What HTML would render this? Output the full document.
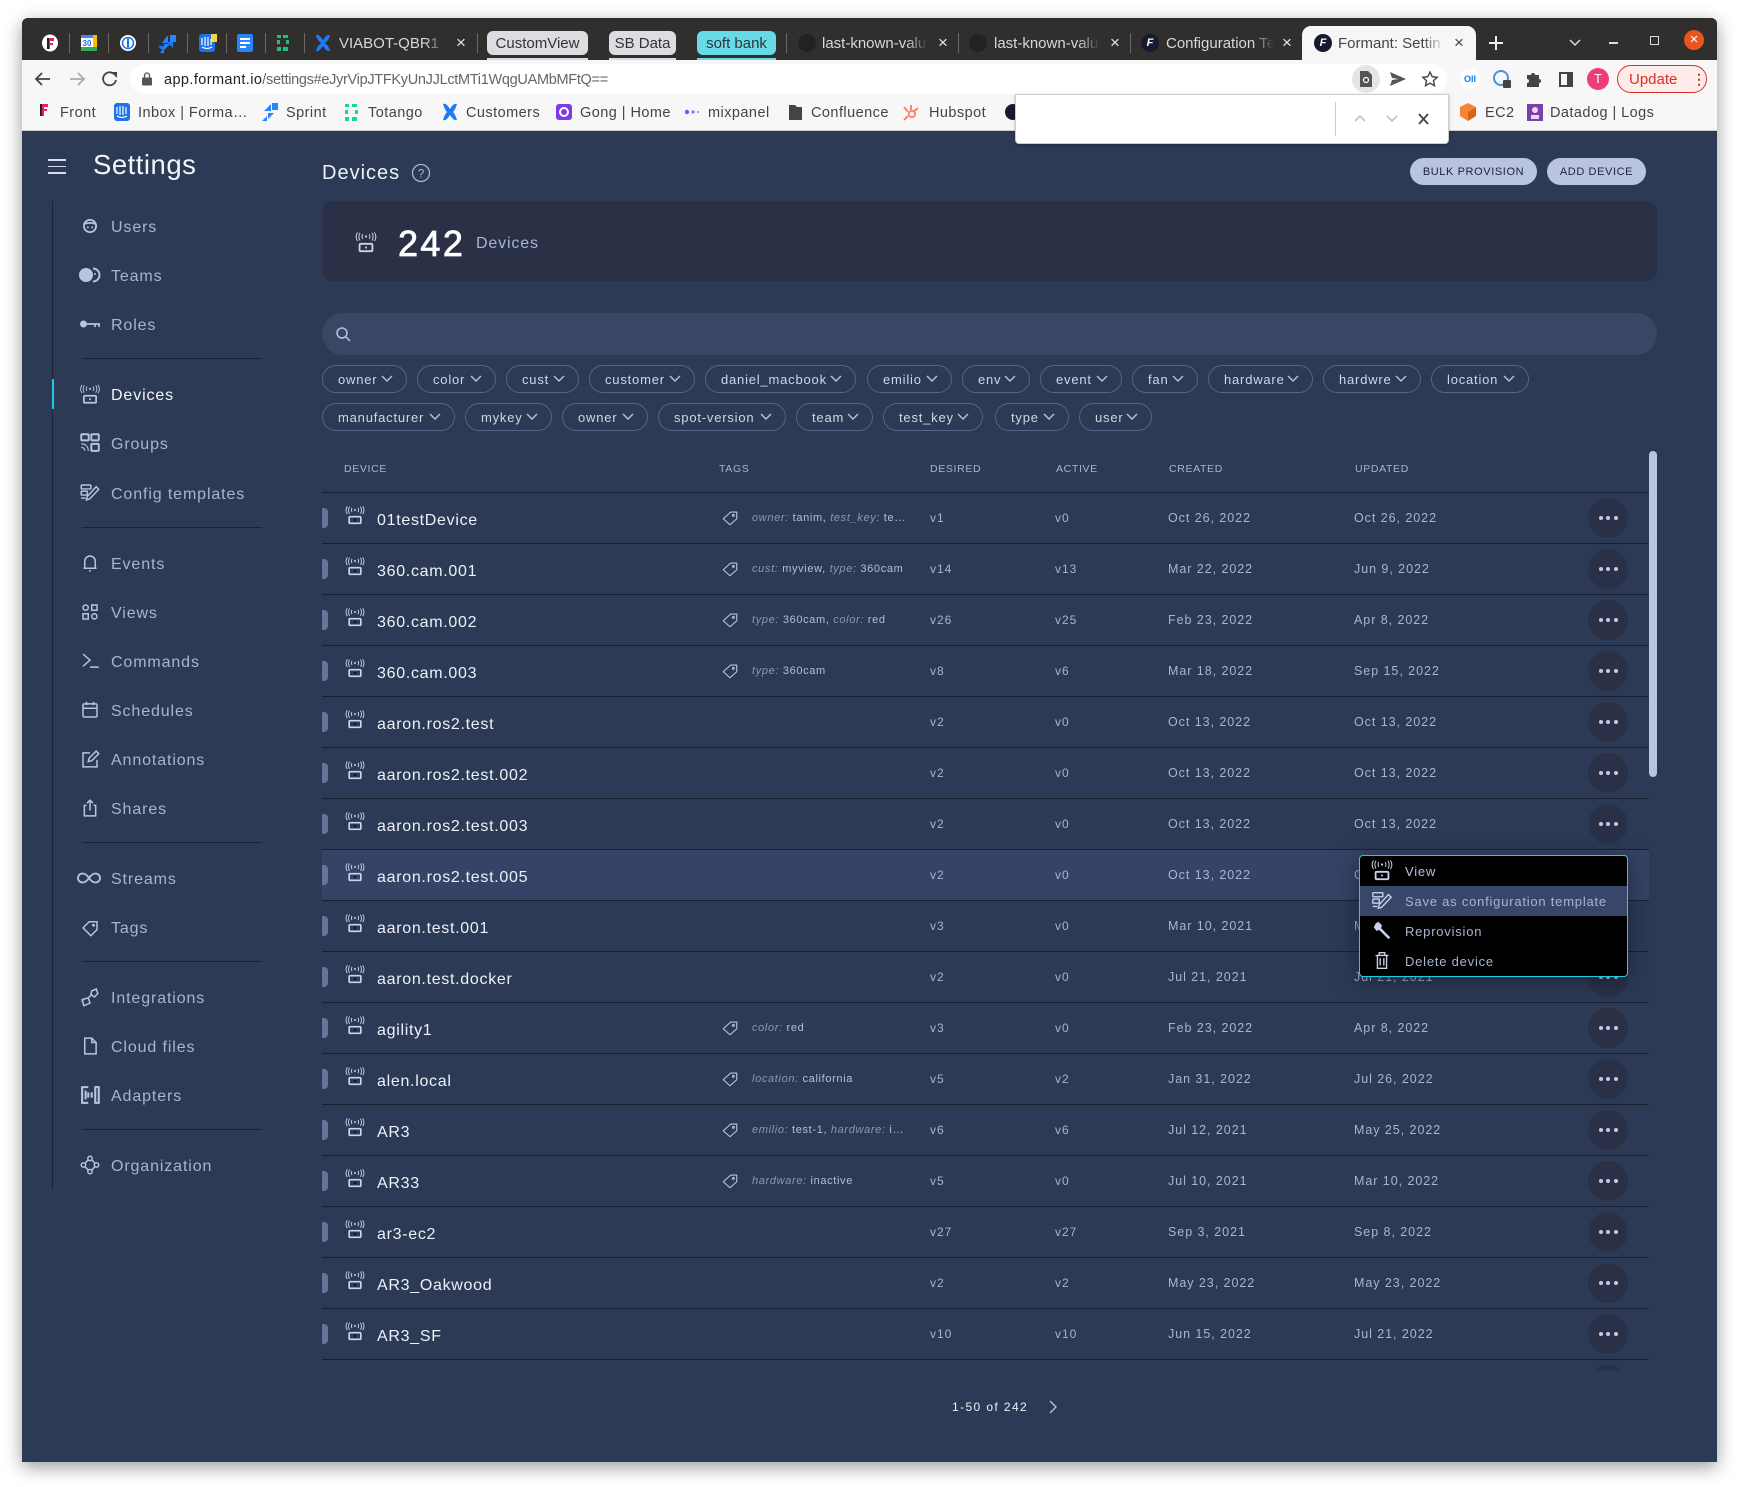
<!DOCTYPE html>
<html lang="en"><head><meta charset="utf-8"><title>Formant: Settings</title>
<style>
html,body{margin:0;padding:0;background:#fff}
body{width:1739px;height:1487px;position:relative;overflow:hidden;font-family:"Liberation Sans",sans-serif}
*{box-sizing:border-box}
.a{position:absolute;white-space:nowrap}
#win{left:22px;top:18px;width:1695px;height:1444px;background:#2c3a55;box-shadow:0 5px 18px rgba(0,0,0,.4);border-radius:6px 6px 0 0}
.tt{position:absolute;font-size:15px;line-height:25px;top:31px;color:#d8d8d8;overflow:hidden;white-space:nowrap}
.fade{-webkit-mask-image:linear-gradient(90deg,#000 80%,transparent);mask-image:linear-gradient(90deg,#000 80%,transparent)}
.sep{position:absolute;top:33px;width:1px;height:20px;background:#6b6868}
.x{position:absolute;top:31px;line-height:24px;font-size:17px;color:#e6e6e6;width:14px;text-align:center}
.pill{position:absolute;top:31px;height:24px;border-radius:6px;font-size:15px;line-height:25px;text-align:center;color:#333}
.sliv{position:absolute;top:58px;height:2px}
.bm{position:absolute;top:103px;line-height:20px;font-size:14.5px;letter-spacing:.45px;color:#444}
.ni{position:absolute;left:111px;margin-top:2px;font-size:16px;letter-spacing:.88px;line-height:22px;color:#a7b4d4}
.si{position:absolute;width:24px;height:24px;left:78px;fill:none;stroke:#b8c4e0;stroke-width:1.7;transform:scale(.875)}
.dv{position:absolute;left:82px;width:180px;height:1px;background:#1c2133}
.chip{position:absolute;height:28px;border:1px solid #56648a;border-radius:14px;color:#cfd7ea;font-size:13px;letter-spacing:.8px;line-height:28px;padding-left:15px}
.chip svg{position:absolute;right:13px;top:9px;width:12px;height:8px;fill:none;stroke:#b8c4e0;stroke-width:1.4}
.th{position:absolute;top:459px;font-size:10.5px;line-height:20px;letter-spacing:.65px;color:#a7b4d4}
.r{position:absolute;left:322px;width:1327px;height:51px;border-bottom:1.3px solid #1b2030}
.r>*{position:absolute}
.h{left:0;top:15px;width:6px;height:20px;background:#66749a;border-radius:0 4px 4px 0}
.di{left:23px;top:12px;width:20px;height:20px;fill:none;stroke:#cbd4ea;stroke-width:1.5}
.n{left:55px;top:18px;font-size:16px;letter-spacing:.7px;line-height:20px;color:#eef1f8}
.g{left:399px;top:16px;width:18px;height:18px;fill:none;stroke:#b8c4e0;stroke-width:1.5}
.t{left:430px;top:15px;font-size:11px;letter-spacing:.65px;line-height:20px;color:#b3bfdb}
.t i{color:#8a97b9}
.v{top:15px;font-size:12px;letter-spacing:1px;line-height:20px;color:#a7b4d4}
.v1{left:608px}.v2{left:733px}.c{left:846px;font-size:12.5px;letter-spacing:.95px}.u{left:1032px;font-size:12.5px;letter-spacing:.95px}
.d{left:1266px;top:5px;width:40px;height:40px;border-radius:50%;background:#2a3147}
.d b{position:absolute;top:18px;width:4.4px;height:4.4px;border-radius:50%;background:#c0cbe5}
.d b:nth-child(1){left:10.5px}.d b:nth-child(2){left:18px}.d b:nth-child(3){left:25.5px}
.mi{position:absolute;left:1px;width:267px;height:30px;color:#a7b4d4;font-size:13px;letter-spacing:.78px;line-height:32px;padding-left:45px}
.mi svg{position:absolute;left:11px;top:3px;width:22px;height:22px;fill:none;stroke:#c8d1e8;stroke-width:1.5}
</style></head><body>
<svg width="0" height="0" style="position:absolute"><defs>
<symbol id="dev" viewBox="0 0 24 24"><rect x="5" y="14" width="14" height="8" rx="1.2" stroke-width="2"/><rect x="11" y="17" width="2" height="2" fill="currentColor" stroke="none"/><circle cx="12" cy="6" r="1.2" fill="#cbd4ea" stroke="none"/><path d="M8.5 3.5c-1 1.5-1 3.5 0 5M15.5 3.5c1 1.5 1 3.5 0 5M5.5 2c-1.7 2.5-1.7 6 0 8.500M18.500 2c1.700 2.500 1.700 6 0 8.500M2.800 1.500c-2 3-2 6.500 0 9.500M21.200 1.500c2 3 2 6.500 0 9.500" stroke-width="1.100"/></symbol>
<symbol id="tag" viewBox="0 0 24 24"><path d="M3 13 13 4h8v9l-9 8z" stroke-linejoin="round"/><circle cx="16.500" cy="8.500" r="1.200"/></symbol>
<symbol id="cfg" viewBox="0 0 24 24"><rect x="2" y="4" width="11" height="4.500" rx=".8"/><rect x="2" y="11" width="7" height="4.500" rx=".8"/><path d="M8 21l1-4L19 6l3 3-10.500 11zM2 19h5"/></symbol>
</defs></svg>
<div class="a" id="win"></div>
<!-- tab strip -->
<div class="a" style="left:22px;top:18px;width:1695px;height:42px;background:#312e2e;border-radius:6px 6px 0 0"></div>
<svg class="a" style="left:40px;top:32px" width="260" height="24" viewBox="0 0 260 24">
<ellipse cx="10" cy="11" rx="8" ry="8.500" fill="#fff"/><path d="M7 6h7v3h-4v2h3v2h-3v4H7z" fill="#e6245c"/><path d="M7 6h2v11H7z" fill="#222"/>
<rect x="41" y="3" width="16" height="16" rx="1.500" fill="#fff"/><path d="M41 15h16v4H41z" fill="#34a853"/><path d="M41 3h16v3H41z" fill="#4285f4"/><path d="M53 3h4v12h-4z" fill="#fbbc04"/><text x="47" y="14" font-size="8" font-weight="700" fill="#1a73e8" text-anchor="middle" font-family="Liberation Sans">30</text>
<circle cx="88" cy="11" r="8" fill="#fff"/><circle cx="88" cy="11" r="5.500" fill="none" stroke="#1a73e8" stroke-width="1.500"/><rect x="87" y="6.500" width="2" height="9" fill="#1a73e8"/>
<path d="M122 11h6V4h-1zM130 3h6v7h-6zM120 21l4-5v5zM124 18v-6h6z" fill="#2684ff"/><path d="M118 14h6v6l-6-6zM127 10h6v6z" fill="#1d78f0"/>
<rect x="159" y="2" width="16" height="18" rx="3" fill="#1f73e6"/><rect x="171" y="2" width="6" height="8" fill="#f5d547"/><path d="M162 6v7M165 5v9M168 5v9M171 7v6M162 15c3 2 7 2 10 0" stroke="#fff" stroke-width="1.200" fill="none"/>
<rect x="197" y="2" width="16" height="18" rx="2" fill="#2684fc"/><path d="M200 7h10M200 11h10M200 15h6" stroke="#fff" stroke-width="2"/>
<g fill="#19c37d"><rect x="237" y="3" width="4" height="3"/><rect x="243" y="3" width="5" height="3"/><rect x="237" y="8" width="3" height="4"/><rect x="246" y="8" width="3" height="4"/><rect x="237" y="15" width="4" height="4"/><rect x="243" y="15" width="5" height="4"/></g>
</svg>
<div class="sep" style="left:69px"></div><div class="sep" style="left:108px"></div><div class="sep" style="left:148px"></div><div class="sep" style="left:187px"></div><div class="sep" style="left:226px"></div><div class="sep" style="left:265px"></div><div class="sep" style="left:304px"></div>
<svg class="a" style="left:315px;top:33px" width="16" height="20" viewBox="0 0 18 22"><path d="M1 2c3-1 6 2 8 6 2-4 5-7 8-6-1 4-3 7-6 9 3 2 5 5 6 9-3 1-6-2-8-6-2 4-5 7-8 6 1-4 3-7 6-9C4 9 2 6 1 2z" fill="#1e7cf2"/></svg>
<div class="tt fade" style="left:339px;width:107px">VIABOT-QBR1 - C</div><div class="x" style="left:454px">×</div><div class="sep" style="left:477px"></div>
<div class="pill" style="left:487px;width:101px;background:#dcdde0">CustomView</div><div class="sliv" style="left:487px;width:101px;background:#dcdde0"></div>
<div class="pill" style="left:609px;width:67px;background:#dcdde0">SB Data</div><div class="sliv" style="left:609px;width:67px;background:#dcdde0"></div>
<div class="pill" style="left:697px;width:79px;background:#67dce8">soft bank</div><div class="sliv" style="left:697px;width:79px;background:#67dce8"></div>
<div class="sep" style="left:786px"></div>
<div class="a" style="left:798px;top:34px;width:18px;height:18px;border-radius:50%;background:#222"></div>
<div class="tt fade" style="left:822px;width:106px">last-known-valu</div><div class="x" style="left:936px">×</div><div class="sep" style="left:958px"></div>
<div class="a" style="left:969px;top:34px;width:18px;height:18px;border-radius:50%;background:#222"></div>
<div class="tt fade" style="left:994px;width:106px">last-known-valu</div><div class="x" style="left:1108px">×</div><div class="sep" style="left:1130px"></div>
<div class="a" style="left:1141px;top:34px;width:18px;height:18px;border-radius:50%;background:#161a2e;color:#fff;font:italic 700 11px/18px 'Liberation Sans',sans-serif;text-align:center">F</div>
<div class="tt fade" style="left:1166px;width:108px">Configuration Te</div><div class="x" style="left:1280px">×</div>
<div class="a" style="left:1302px;top:26px;width:174px;height:34px;background:#f6f6f6;border-radius:9px 9px 0 0"></div>
<div class="a" style="left:1314px;top:34px;width:18px;height:18px;border-radius:50%;background:#161a2e;color:#fff;font:italic 700 11px/18px 'Liberation Sans',sans-serif;text-align:center">F</div>
<div class="tt fade" style="left:1338px;width:106px;color:#444">Formant: Settin</div><div class="x" style="left:1452px;color:#444">×</div>
<svg class="a" style="left:1486px;top:33px" width="20" height="20" viewBox="0 0 20 20"><path d="M10 3v14M3 10h14" stroke="#eee" stroke-width="2"/></svg>
<svg class="a" style="left:1569px;top:39px" width="12" height="8" viewBox="0 0 12 8"><path d="M1 1l5 5 5-5" fill="none" stroke="#ddd" stroke-width="1.500"/></svg>
<div class="a" style="left:1609px;top:42px;width:9px;height:1.500px;background:#ddd"></div>
<div class="a" style="left:1650px;top:36px;width:9px;height:9px;border:1.500px solid #ddd"></div>
<div class="a" style="left:1684px;top:30px;width:20px;height:20px;border-radius:50%;background:#e95420;color:#fff;font-size:15px;line-height:20px;text-align:center">×</div>
<!-- toolbar -->
<div class="a" style="left:22px;top:60px;width:1695px;height:71px;background:#f7f7f7;border-bottom:1px solid #ccc"></div>
<div class="a" style="left:130px;top:64px;width:1317px;height:30px;background:#fff;border-radius:15px"></div>
<svg class="a" style="left:33px;top:69px" width="90" height="20" viewBox="0 0 90 20"><path d="M17 10H3M9 4l-6 6 6 6" fill="none" stroke="#444" stroke-width="1.800"/><path d="M37 10h14M45 4l6 6-6 6" fill="none" stroke="#aaa" stroke-width="1.800"/><path d="M81 5a6.500 6.500 0 1 0 2 6" fill="none" stroke="#444" stroke-width="1.800"/><path d="M78 3h6v6z" fill="#444"/></svg>
<svg class="a" style="left:142px;top:72px" width="10" height="14" viewBox="0 0 10 14"><rect x="0" y="5.500" width="10" height="8" rx="1" fill="#555"/><path d="M2.500 6V3.500a2.500 2.500 0 0 1 5 0V6" fill="none" stroke="#555" stroke-width="1.300"/></svg>
<div class="a" style="left:164px;top:70px;font-size:14.500px;letter-spacing:.4px;line-height:20px;color:#222">app.formant.io<span style="color:#666;letter-spacing:-.3px">/settings#eJyrVipJTFKyUnJJLctMTi1WqgUAMbMFtQ==</span></div>
<div class="a" style="left:1352px;top:65px;width:28px;height:28px;border-radius:50%;background:#e5e5e5"></div>
<svg class="a" style="left:1358px;top:70px" width="16" height="18" viewBox="0 0 16 18"><path d="M2 1h8l4 4v12H2z" fill="#555"/><circle cx="8" cy="10" r="2.500" fill="none" stroke="#fff" stroke-width="1.200"/></svg>
<svg class="a" style="left:1389px;top:71px" width="18" height="16" viewBox="0 0 18 16"><path d="M1 1l16 7L1 15l2-6 7-1-7-1z" fill="#555"/></svg>
<svg class="a" style="left:1421px;top:70px" width="18" height="18" viewBox="0 0 18 18"><path d="M9 2l2.200 4.700 5 .6-3.700 3.400 1 5L9 13.200l-4.500 2.500 1-5L1.800 7.300l5-.6z" fill="none" stroke="#444" stroke-width="1.400"/></svg>
<div class="a" style="left:1460px;top:69px;width:20px;height:20px;border-radius:50%;background:#fff;color:#0a7cf0;font:700 9px/20px 'Liberation Sans',sans-serif;text-align:center">OII</div>
<svg class="a" style="left:1492px;top:69px" width="20" height="20" viewBox="0 0 20 20"><circle cx="9" cy="9" r="7" fill="none" stroke="#4a90d9" stroke-width="2"/><rect x="11" y="11" width="8" height="8" rx="1" fill="#444"/></svg>
<svg class="a" style="left:1525px;top:70px" width="18" height="18" viewBox="0 0 18 18"><path d="M2 5h4a2 2 0 1 1 4 0h4v4a2 2 0 1 1 0 4v4H2v-4a2 2 0 1 0 0-4z" fill="#444"/></svg>
<div class="a" style="left:1559px;top:72px;width:14px;height:15px;border:2px solid #444;border-right-width:6px"></div>
<div class="a" style="left:1587px;top:68px;width:22px;height:22px;border-radius:50%;background:#ee3b7b;color:#fff;font-size:13px;line-height:22px;text-align:center">T</div>
<div class="a" style="left:1617px;top:65px;width:90px;height:28px;border-radius:14px;border:1px solid #d93025;background:#fdecea;color:#d93025;font-size:15px;line-height:27px;padding-left:11px">Update<span style="position:absolute;left:74px;top:0;font-weight:700;font-size:14px">⋮</span></div>
<!-- bookmarks -->
<svg class="a" style="left:36px;top:102px" width="1530" height="20" viewBox="36 102 1530 20">
<path d="M40 104h8v3h-4v2h3v2h-3v5h-4z" fill="#e6245c"/><path d="M40 104h2v12h-2z" fill="#222"/>
<rect x="114" y="103" width="16" height="18" rx="3" fill="#1f73e6"/><path d="M117 107v7M120 106v9M123 106v9M126 107v7M117 116c3 2 7 2 10 0" stroke="#fff" stroke-width="1.200" fill="none"/>
<path d="M264 111h7v-7l-7 7zM272 103h6v7h-6zM262 121l5-5v5zM268 119v-6h6z" fill="#2684ff"/>
<g fill="#19d3a0"><rect x="345" y="104" width="4" height="3"/><rect x="352" y="104" width="5" height="3"/><rect x="345" y="110" width="3" height="4"/><rect x="355" y="110" width="3" height="4"/><rect x="345" y="117" width="4" height="4"/><rect x="352" y="117" width="5" height="4"/></g>
<path d="M443 104c3-1 5 2 7 5 2-3 4-6 7-5-1 3-2 6-4 8 2 2 3 5 4 8-3 1-5-2-7-5-2 3-4 6-7 5 1-3 2-6 4-8-2-2-3-5-4-8z" fill="#1e7cf2"/>
<rect x="556" y="104" width="16" height="16" rx="3" fill="#7a3bea"/><circle cx="564" cy="112" r="4" fill="none" stroke="#fff" stroke-width="2"/>
<circle cx="687" cy="112" r="2.200" fill="#6e5cf0"/><circle cx="693" cy="112" r="1.600" fill="#8a6cf2"/><circle cx="698" cy="112" r="1" fill="#9a7cf2"/>
<path d="M789 105h6l2 2h5v13h-13z" fill="#444"/>
<path d="M911 105v5M918 108l-5 4M908 112l-4-5M908 116l-4 4" stroke="#ff7a59" stroke-width="1.800"/><circle cx="912" cy="114" r="3.200" fill="none" stroke="#ff7a59" stroke-width="1.600"/>
<path d="M1468 103l8 4v9l-8 5-8-5v-9z" fill="#f58534"/><path d="M1468 112v9l8-5v-9z" fill="#d9631a"/>
<rect x="1527" y="104" width="16" height="17" fill="#7a3fa8"/><circle cx="1535" cy="110" r="3" fill="#e8d6f5"/><path d="M1531 115h8v4h-8z" fill="#e8d6f5"/>
</svg>
<div class="bm" style="left:60px">Front</div><div class="bm" style="left:138px">Inbox | Forma…</div><div class="bm" style="left:286px">Sprint</div><div class="bm" style="left:368px">Totango</div><div class="bm" style="left:466px">Customers</div><div class="bm" style="left:580px">Gong | Home</div><div class="bm" style="left:708px">mixpanel</div><div class="bm" style="left:811px">Confluence</div><div class="bm" style="left:929px">Hubspot</div>
<div class="a" style="left:1005px;top:104px;width:16px;height:16px;border-radius:50%;background:#161a2e"></div>
<div class="bm" style="left:1485px">EC2</div><div class="bm" style="left:1550px">Datadog | Logs</div>
<!-- find bar -->
<div class="a" style="left:1015px;top:94px;width:434px;height:50px;background:#fff;border:1px solid #ccc;border-radius:0 0 4px 4px;box-shadow:0 1px 3px rgba(0,0,0,.25)"></div>
<div class="a" style="left:1335px;top:102px;width:1px;height:34px;background:#ccc"></div>
<svg class="a" style="left:1354px;top:112px" width="80" height="14" viewBox="0 0 80 14"><path d="M1 9l5-5 5 5M33 4l5 5 5-5" fill="none" stroke="#bbb" stroke-width="1.500"/><path d="M65 2l9 10M74 2l-9 10" fill="none" stroke="#444" stroke-width="1.800"/></svg>

<!-- sidebar -->
<div class="a" style="left:48px;top:159px;width:18px;height:1.500px;background:#d6deef"></div><div class="a" style="left:48px;top:165.500px;width:18px;height:1.500px;background:#d6deef"></div><div class="a" style="left:48px;top:172px;width:18px;height:1.500px;background:#d6deef"></div>
<div class="a" style="left:93px;top:147px;font-size:27.500px;letter-spacing:.5px;line-height:36px;color:#f2f4fa">Settings</div>
<div class="a" style="left:52px;top:201px;width:1px;height:988px;background:#1c2133"></div>
<div class="a" style="left:52px;top:379px;width:1.500px;height:30px;background:#1ecbe1"></div>
<div class="dv" style="top:358px"></div><div class="dv" style="top:527px"></div><div class="dv" style="top:842px"></div><div class="dv" style="top:961px"></div><div class="dv" style="top:1129px"></div>
<div class="ni" style="top:215px">Users</div><div class="ni" style="top:264px">Teams</div><div class="ni" style="top:313px">Roles</div><div class="ni" style="top:383px;color:#f2f4fa">Devices</div><div class="ni" style="top:432px">Groups</div><div class="ni" style="top:481.500px">Config templates</div><div class="ni" style="top:552px">Events</div><div class="ni" style="top:601px">Views</div><div class="ni" style="top:650px">Commands</div><div class="ni" style="top:699px">Schedules</div><div class="ni" style="top:748px">Annotations</div><div class="ni" style="top:797px">Shares</div><div class="ni" style="top:867px">Streams</div><div class="ni" style="top:916px">Tags</div><div class="ni" style="top:986px">Integrations</div><div class="ni" style="top:1035px">Cloud files</div><div class="ni" style="top:1084px">Adapters</div><div class="ni" style="top:1154px">Organization</div>
<svg class="si" style="top:214px" viewBox="0 0 24 24"><circle cx="12" cy="12" r="7" stroke-width="2"/><circle cx="9.500" cy="13.500" r="1.100" fill="#b8c4e0" stroke="none"/><circle cx="14.500" cy="13.500" r="1.100" fill="#b8c4e0" stroke="none"/><path d="M6 9.500c4-1.500 8-1.500 12 0" stroke-width="2"/></svg>
<svg class="si" style="top:263px;transform:none" viewBox="0 0 24 24"><path d="M15 5.500a6.500 6.500 0 1 1 0 13" stroke-width="2"/><circle cx="8" cy="12" r="7" fill="#b8c4e0" stroke="none"/><circle cx="17" cy="11" r="1" fill="#b8c4e0" stroke="none"/></svg>
<svg class="si" style="top:312px;transform:none" viewBox="0 0 24 24"><circle cx="5.500" cy="12" r="3.500" fill="#b8c4e0" stroke="none"/><path d="M8 12h14M17 12v3M21 12v3"/></svg>
<svg class="si" style="top:382px;color:#b8c4e0" viewBox="0 0 24 24"><use href="#dev"/></svg>
<svg class="si" style="top:431px;stroke-width:2.200" viewBox="0 0 24 24"><rect x="2" y="2" width="8.500" height="7" rx="1"/><rect x="13.500" y="2" width="8.500" height="7" rx="1"/><rect x="13.500" y="13" width="8.500" height="8" rx="1"/><path d="M2 13c5 0 8 3 8 8M2 17c2.500 0 4 1.500 4 4" stroke-width="1.300"/></svg>
<svg class="si" style="top:480px" viewBox="0 0 24 24"><use href="#cfg"/></svg>
<svg class="si" style="top:551px" viewBox="0 0 24 24"><path d="M6 18V10a6 6 0 0 1 12 0v8zM4.500 18h15M11 21h2"/></svg>
<svg class="si" style="top:600px" viewBox="0 0 24 24"><circle cx="7" cy="7" r="3"/><rect x="14" y="4" width="6" height="6"/><rect x="4" y="14" width="6" height="6"/><circle cx="17" cy="17" r="3"/></svg>
<svg class="si" style="top:649px" viewBox="0 0 24 24"><path d="M4 4l8 7-8 7M12 19h10"/></svg>
<svg class="si" style="top:698px" viewBox="0 0 24 24"><rect x="4" y="5" width="16" height="15" rx="1.500"/><path d="M4 10h16M8 2.500v4M16 2.500v4"/></svg>
<svg class="si" style="top:747px" viewBox="0 0 24 24"><path d="M12 5H4v16h16v-8M10 15l1-4 8-8 3 3-8 8z"/></svg>
<svg class="si" style="top:796px" viewBox="0 0 24 24"><path d="M8 9H5.500v12h13V9H16M12 15V3M8.500 6.500 12 3l3.500 3.500"/></svg>
<svg class="si" style="top:866px;transform:none;left:77px" viewBox="0 0 24 24"><path d="M12 12c-2-3-4-4.500-6.500-4.500a4.500 4.500 0 0 0 0 9c2.500 0 4.500-1.500 6.500-4.500s4-4.500 6.500-4.500a4.500 4.500 0 0 1 0 9c-2.500 0-4.500-1.500-6.500-4.500z" stroke-width="1.800"/></svg>
<svg class="si" style="top:915px" viewBox="0 0 24 24"><path d="M4 13 11 6h9v9l-7 7z" stroke-linejoin="round"/><circle cx="16" cy="10" r=".8" fill="#b8c4e0"/></svg>
<svg class="si" style="top:985px" viewBox="0 0 24 24"><path d="M3 15l7-2 2 6-7 3zM14 5l5-2 2 5-4 4-4-3zM10 13l4-4M19 2l1 3M4 15l-1 3"/></svg>
<svg class="si" style="top:1034px" viewBox="0 0 24 24"><path d="M6 3h8l5 5v13H6zM14 3v5h5"/></svg>
<svg class="si" style="top:1083px;stroke-width:2.400" viewBox="0 0 24 24"><path d="M10 3H3v18h7M18 3h4v18h-4zM7 7v10M10 9v6M14 9v6"/></svg>
<svg class="si" style="top:1153px" viewBox="0 0 24 24"><circle cx="12" cy="4.500" r="2.500"/><circle cx="12" cy="19.500" r="2.500"/><circle cx="4.500" cy="12" r="2.500"/><circle cx="19.500" cy="12" r="2.500"/><path d="M10 6 6.500 10M14 6l3.500 4M10 18l-3.500-4M14 18l3.500-4"/></svg>

<!-- header -->
<div class="a" style="left:322px;top:160px;font-size:20px;letter-spacing:1px;line-height:26px;color:#eef1f8">Devices</div>
<svg class="a" style="left:411px;top:163px" width="20" height="20" viewBox="0 0 20 20"><circle cx="10" cy="10" r="8.500" fill="none" stroke="#a7b4d4" stroke-width="1.300"/><text x="10" y="14.500" font-size="12" text-anchor="middle" fill="#a7b4d4" font-family="Liberation Sans">?</text></svg>
<div class="a" style="left:1410px;top:158px;width:127px;height:27px;border-radius:14px;background:#b8c4e0;color:#1e2538;font-size:11px;letter-spacing:.6px;line-height:29px;text-align:center">BULK PROVISION</div>
<div class="a" style="left:1547px;top:158px;width:99px;height:27px;border-radius:14px;background:#b8c4e0;color:#1e2538;font-size:11px;letter-spacing:.6px;line-height:29px;text-align:center">ADD DEVICE</div>
<div class="a" style="left:322px;top:201px;width:1335px;height:80px;border-radius:10px;background:#2a3147"></div>
<svg class="a" style="left:355px;top:231px;color:#cbd4ea;fill:none;stroke:#cbd4ea" width="22" height="22" viewBox="0 0 24 24"><use href="#dev"/></svg>
<div class="a" style="left:398px;top:222px;font-size:36px;letter-spacing:2.400px;line-height:44px;color:#fff;-webkit-text-stroke:.8px #fff">242</div>
<div class="a" style="left:476px;top:233px;font-size:16px;letter-spacing:.85px;line-height:22px;color:#a7b4d4">Devices</div>
<div class="a" style="left:322px;top:313px;width:1335px;height:42px;border-radius:21px;background:#394765"></div>
<svg class="a" style="left:335px;top:326px" width="16" height="16" viewBox="0 0 16 16"><circle cx="7" cy="7" r="5" fill="none" stroke="#b8c4e0" stroke-width="1.500"/><path d="M11 11l4 4" stroke="#b8c4e0" stroke-width="1.500"/></svg>
<!-- chips -->
<div class="chip" style="left:322px;top:365px;width:85px">owner<svg viewBox="0 0 12 8"><path d="M1 1l5 5 5-5"/></svg></div>
<div class="chip" style="left:417px;top:365px;width:79px">color<svg viewBox="0 0 12 8"><path d="M1 1l5 5 5-5"/></svg></div>
<div class="chip" style="left:506px;top:365px;width:73px">cust<svg viewBox="0 0 12 8"><path d="M1 1l5 5 5-5"/></svg></div>
<div class="chip" style="left:589px;top:365px;width:106px">customer<svg viewBox="0 0 12 8"><path d="M1 1l5 5 5-5"/></svg></div>
<div class="chip" style="left:705px;top:365px;width:151px">daniel_macbook<svg viewBox="0 0 12 8"><path d="M1 1l5 5 5-5"/></svg></div>
<div class="chip" style="left:867px;top:365px;width:85px">emilio<svg viewBox="0 0 12 8"><path d="M1 1l5 5 5-5"/></svg></div>
<div class="chip" style="left:962px;top:365px;width:68px">env<svg viewBox="0 0 12 8"><path d="M1 1l5 5 5-5"/></svg></div>
<div class="chip" style="left:1040px;top:365px;width:82px">event<svg viewBox="0 0 12 8"><path d="M1 1l5 5 5-5"/></svg></div>
<div class="chip" style="left:1132px;top:365px;width:66px">fan<svg viewBox="0 0 12 8"><path d="M1 1l5 5 5-5"/></svg></div>
<div class="chip" style="left:1208px;top:365px;width:105px">hardware<svg viewBox="0 0 12 8"><path d="M1 1l5 5 5-5"/></svg></div>
<div class="chip" style="left:1323px;top:365px;width:98px">hardwre<svg viewBox="0 0 12 8"><path d="M1 1l5 5 5-5"/></svg></div>
<div class="chip" style="left:1431px;top:365px;width:98px">location<svg viewBox="0 0 12 8"><path d="M1 1l5 5 5-5"/></svg></div>
<div class="chip" style="left:322px;top:403px;width:133px">manufacturer<svg viewBox="0 0 12 8"><path d="M1 1l5 5 5-5"/></svg></div>
<div class="chip" style="left:465px;top:403px;width:87px">mykey<svg viewBox="0 0 12 8"><path d="M1 1l5 5 5-5"/></svg></div>
<div class="chip" style="left:562px;top:403px;width:86px">owner<svg viewBox="0 0 12 8"><path d="M1 1l5 5 5-5"/></svg></div>
<div class="chip" style="left:658px;top:403px;width:128px">spot-version<svg viewBox="0 0 12 8"><path d="M1 1l5 5 5-5"/></svg></div>
<div class="chip" style="left:796px;top:403px;width:77px">team<svg viewBox="0 0 12 8"><path d="M1 1l5 5 5-5"/></svg></div>
<div class="chip" style="left:883px;top:403px;width:100px">test_key<svg viewBox="0 0 12 8"><path d="M1 1l5 5 5-5"/></svg></div>
<div class="chip" style="left:995px;top:403px;width:74px">type<svg viewBox="0 0 12 8"><path d="M1 1l5 5 5-5"/></svg></div>
<div class="chip" style="left:1079px;top:403px;width:73px">user<svg viewBox="0 0 12 8"><path d="M1 1l5 5 5-5"/></svg></div>
<!-- table head -->
<div class="th" style="left:344px">DEVICE</div><div class="th" style="left:719px">TAGS</div><div class="th" style="left:930px">DESIRED</div><div class="th" style="left:1056px">ACTIVE</div><div class="th" style="left:1169px">CREATED</div><div class="th" style="left:1355px">UPDATED</div>
<div class="a" style="left:322px;top:492px;width:1327px;height:1.300px;background:#1b2030"></div>
<div class="a" style="left:1649px;top:451px;width:8px;height:326px;border-radius:4px;background:#b8c4e0"></div>
<!-- rows -->
<div class="a r" style="top:493px"><div class="h"></div><svg class="di" viewBox="0 0 24 24"><use href="#dev"/></svg><div class="n">01testDevice</div><svg class="g" viewBox="0 0 24 24"><use href="#tag"/></svg><div class="t"><i>owner:</i> tanim, <i>test_key:</i> te…</div><div class="v v1">v1</div><div class="v v2">v0</div><div class="v c">Oct 26, 2022</div><div class="v u">Oct 26, 2022</div><div class="d"><b></b><b></b><b></b></div></div>
<div class="a r" style="top:544px"><div class="h"></div><svg class="di" viewBox="0 0 24 24"><use href="#dev"/></svg><div class="n">360.cam.001</div><svg class="g" viewBox="0 0 24 24"><use href="#tag"/></svg><div class="t"><i>cust:</i> myview, <i>type:</i> 360cam</div><div class="v v1">v14</div><div class="v v2">v13</div><div class="v c">Mar 22, 2022</div><div class="v u">Jun 9, 2022</div><div class="d"><b></b><b></b><b></b></div></div>
<div class="a r" style="top:595px"><div class="h"></div><svg class="di" viewBox="0 0 24 24"><use href="#dev"/></svg><div class="n">360.cam.002</div><svg class="g" viewBox="0 0 24 24"><use href="#tag"/></svg><div class="t"><i>type:</i> 360cam, <i>color:</i> red</div><div class="v v1">v26</div><div class="v v2">v25</div><div class="v c">Feb 23, 2022</div><div class="v u">Apr 8, 2022</div><div class="d"><b></b><b></b><b></b></div></div>
<div class="a r" style="top:646px"><div class="h"></div><svg class="di" viewBox="0 0 24 24"><use href="#dev"/></svg><div class="n">360.cam.003</div><svg class="g" viewBox="0 0 24 24"><use href="#tag"/></svg><div class="t"><i>type:</i> 360cam</div><div class="v v1">v8</div><div class="v v2">v6</div><div class="v c">Mar 18, 2022</div><div class="v u">Sep 15, 2022</div><div class="d"><b></b><b></b><b></b></div></div>
<div class="a r" style="top:697px"><div class="h"></div><svg class="di" viewBox="0 0 24 24"><use href="#dev"/></svg><div class="n">aaron.ros2.test</div><div class="v v1">v2</div><div class="v v2">v0</div><div class="v c">Oct 13, 2022</div><div class="v u">Oct 13, 2022</div><div class="d"><b></b><b></b><b></b></div></div>
<div class="a r" style="top:748px"><div class="h"></div><svg class="di" viewBox="0 0 24 24"><use href="#dev"/></svg><div class="n">aaron.ros2.test.002</div><div class="v v1">v2</div><div class="v v2">v0</div><div class="v c">Oct 13, 2022</div><div class="v u">Oct 13, 2022</div><div class="d"><b></b><b></b><b></b></div></div>
<div class="a r" style="top:799px"><div class="h"></div><svg class="di" viewBox="0 0 24 24"><use href="#dev"/></svg><div class="n">aaron.ros2.test.003</div><div class="v v1">v2</div><div class="v v2">v0</div><div class="v c">Oct 13, 2022</div><div class="v u">Oct 13, 2022</div><div class="d"><b></b><b></b><b></b></div></div>
<div class="a r" style="top:850px;background:#364366"><div class="h"></div><svg class="di" viewBox="0 0 24 24"><use href="#dev"/></svg><div class="n">aaron.ros2.test.005</div><div class="v v1">v2</div><div class="v v2">v0</div><div class="v c">Oct 13, 2022</div><div class="v u">Oct 13, 2022</div></div>
<div class="a r" style="top:901px"><div class="h"></div><svg class="di" viewBox="0 0 24 24"><use href="#dev"/></svg><div class="n">aaron.test.001</div><div class="v v1">v3</div><div class="v v2">v0</div><div class="v c">Mar 10, 2021</div><div class="v u">Mar 10, 2021</div></div>
<div class="a r" style="top:952px"><div class="h"></div><svg class="di" viewBox="0 0 24 24"><use href="#dev"/></svg><div class="n">aaron.test.docker</div><div class="v v1">v2</div><div class="v v2">v0</div><div class="v c">Jul 21, 2021</div><div class="v u">Jul 21, 2021</div><div class="d"><b></b><b></b><b></b></div></div>
<div class="a r" style="top:1003px"><div class="h"></div><svg class="di" viewBox="0 0 24 24"><use href="#dev"/></svg><div class="n">agility1</div><svg class="g" viewBox="0 0 24 24"><use href="#tag"/></svg><div class="t"><i>color:</i> red</div><div class="v v1">v3</div><div class="v v2">v0</div><div class="v c">Feb 23, 2022</div><div class="v u">Apr 8, 2022</div><div class="d"><b></b><b></b><b></b></div></div>
<div class="a r" style="top:1054px"><div class="h"></div><svg class="di" viewBox="0 0 24 24"><use href="#dev"/></svg><div class="n">alen.local</div><svg class="g" viewBox="0 0 24 24"><use href="#tag"/></svg><div class="t"><i>location:</i> california</div><div class="v v1">v5</div><div class="v v2">v2</div><div class="v c">Jan 31, 2022</div><div class="v u">Jul 26, 2022</div><div class="d"><b></b><b></b><b></b></div></div>
<div class="a r" style="top:1105px"><div class="h"></div><svg class="di" viewBox="0 0 24 24"><use href="#dev"/></svg><div class="n">AR3</div><svg class="g" viewBox="0 0 24 24"><use href="#tag"/></svg><div class="t"><i>emilio:</i> test-1, <i>hardware:</i> i…</div><div class="v v1">v6</div><div class="v v2">v6</div><div class="v c">Jul 12, 2021</div><div class="v u">May 25, 2022</div><div class="d"><b></b><b></b><b></b></div></div>
<div class="a r" style="top:1156px"><div class="h"></div><svg class="di" viewBox="0 0 24 24"><use href="#dev"/></svg><div class="n">AR33</div><svg class="g" viewBox="0 0 24 24"><use href="#tag"/></svg><div class="t"><i>hardware:</i> inactive</div><div class="v v1">v5</div><div class="v v2">v0</div><div class="v c">Jul 10, 2021</div><div class="v u">Mar 10, 2022</div><div class="d"><b></b><b></b><b></b></div></div>
<div class="a r" style="top:1207px"><div class="h"></div><svg class="di" viewBox="0 0 24 24"><use href="#dev"/></svg><div class="n">ar3-ec2</div><div class="v v1">v27</div><div class="v v2">v27</div><div class="v c">Sep 3, 2021</div><div class="v u">Sep 8, 2022</div><div class="d"><b></b><b></b><b></b></div></div>
<div class="a r" style="top:1258px"><div class="h"></div><svg class="di" viewBox="0 0 24 24"><use href="#dev"/></svg><div class="n">AR3_Oakwood</div><div class="v v1">v2</div><div class="v v2">v2</div><div class="v c">May 23, 2022</div><div class="v u">May 23, 2022</div><div class="d"><b></b><b></b><b></b></div></div>
<div class="a r" style="top:1309px"><div class="h"></div><svg class="di" viewBox="0 0 24 24"><use href="#dev"/></svg><div class="n">AR3_SF</div><div class="v v1">v10</div><div class="v v2">v10</div><div class="v c">Jun 15, 2022</div><div class="v u">Jul 21, 2022</div><div class="d"><b></b><b></b><b></b></div></div>
<div class="a" style="left:1588px;top:1365px;width:40px;height:5px;overflow:hidden"><div style="width:40px;height:40px;border-radius:50%;background:#2a3147"></div></div>
<!-- pagination -->
<div class="a" style="left:952px;top:1397px;font-size:12px;letter-spacing:1.4px;line-height:20px;color:#eef1f8">1-50 of 242</div>
<svg class="a" style="left:1049px;top:1400px" width="8" height="14" viewBox="0 0 8 14"><path d="M1 1l6 6-6 6" fill="none" stroke="#b8c4e0" stroke-width="1.300"/></svg>
<!-- menu -->
<div class="a" style="left:1359px;top:855px;width:269px;height:122px;background:#000;border:1px solid #1ecbe1;border-radius:4px;box-shadow:0 4px 24px rgba(15,20,35,.55)">
<div class="mi" style="top:0;left:0;color:#b8c4e0"><svg viewBox="0 0 24 24"><use href="#dev"/></svg>View</div>
<div class="mi" style="top:30px;left:0;background:#38466a"><svg viewBox="0 0 24 24"><use href="#cfg"/></svg>Save as configuration template</div>
<div class="mi" style="top:60px;left:0"><svg viewBox="0 0 24 24"><path d="M4 5l3-2 4 4-1 3 10 10-2 2L8 12 5 13l-3-4z" fill="#c8d1e8" stroke="none" transform="translate(1 0)"/></svg>Reprovision</div>
<div class="mi" style="top:90px;left:0"><svg viewBox="0 0 24 24"><path d="M5 7h14M9 7V4h6v3M7 7v14h10V7M10 10v8M14 10v8"/></svg>Delete device</div>
</div>
</body></html>
